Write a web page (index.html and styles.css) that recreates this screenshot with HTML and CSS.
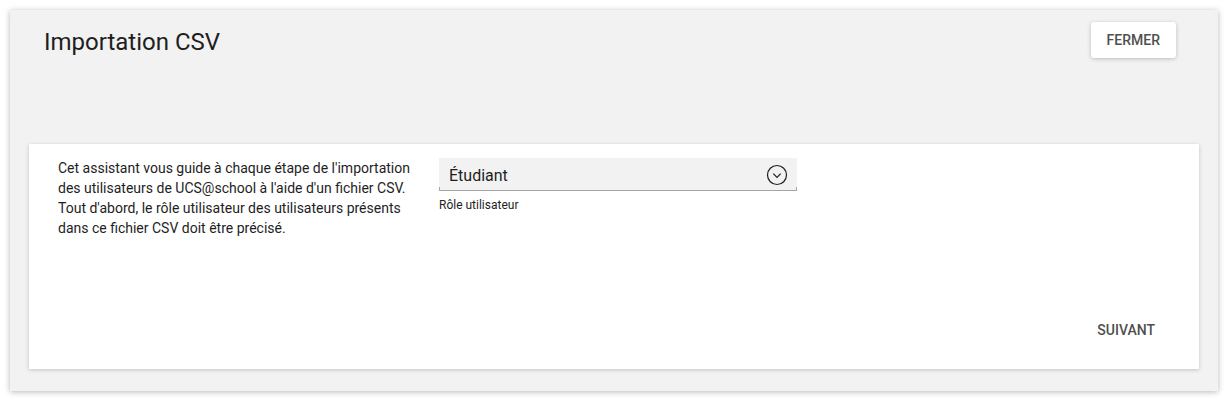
FILE: index.html
```html
<!DOCTYPE html>
<html lang="fr">
<head>
<meta charset="utf-8">
<title>Importation CSV</title>
<link rel="stylesheet" href="styles.css">
</head>
<body>
<div class="dialog">
  <div class="dialog-header">
    <h1 class="dialog-title">Importation CSV</h1>
    <button class="btn btn-raised">Fermer</button>
  </div>
  <div class="card">
    <div class="card-body">
      <p class="description">Cet assistant vous guide à chaque étape de l'importation des utilisateurs de UCS@school à l'aide d'un fichier CSV. Tout d'abord, le rôle utilisateur des utilisateurs présents dans ce fichier CSV doit être précisé.</p>
      <div class="field">
        <div class="select">
          <span class="select-value">Étudiant</span>
          <svg class="select-icon" width="22" height="22" viewBox="0 0 22 22" aria-hidden="true">
            <circle cx="11" cy="11" r="9.5" fill="none" stroke="#1e1e1e" stroke-width="1.2"/>
            <path d="M7.3 9.6 L11 13.3 L14.7 9.6" fill="none" stroke="#1e1e1e" stroke-width="1.2"/>
          </svg>
        </div>
        <label class="field-label">Rôle utilisateur</label>
      </div>
    </div>
    <div class="card-footer">
      <button class="btn btn-flat">Suivant</button>
    </div>
  </div>
</div>
</body>
</html>
```

FILE: styles.css
```css
html, body {
  margin: 0;
  padding: 0;
  background: #ffffff;
}

body {
  font-family: Roboto, "Liberation Sans", sans-serif;
  color: #1e1e1e;
  padding: 10px;
  height: 401px;
  box-sizing: border-box;
}

.dialog {
  background: #f2f2f2;
  height: 381px;
  box-sizing: border-box;
  box-shadow: 0 1px 6px rgba(0, 0, 0, 0.28);
  display: flex;
  flex-direction: column;
  padding: 0 19px 22px 19px;
}

.dialog-header {
  height: 134px;
  display: flex;
  justify-content: space-between;
  align-items: flex-start;
  padding: 12px 23px 0 15px;
  box-sizing: border-box;
}

.dialog-title {
  margin: 0;
  font-size: 24px;
  font-weight: 400;
  line-height: 40px;
  color: #1e1e1e;
}

.btn {
  font-family: Roboto, "Liberation Sans", sans-serif;
  font-size: 14px;
  font-weight: 500;
  text-transform: uppercase;
  color: #4f4f4f;
  border: 0;
  height: 36px;
  padding: 0 16px;
  border-radius: 3px;
  cursor: pointer;
}

.btn-raised {
  background: #ffffff;
  margin-top: 0;
  box-shadow: 0 1px 4px rgba(0, 0, 0, 0.22);
}

.btn-flat {
  background: transparent;
  padding: 0 14px;
}

.card {
  flex: 1;
  background: #ffffff;
  box-shadow: 0 1px 4px rgba(0, 0, 0, 0.2);
  display: flex;
  flex-direction: column;
  padding: 14px 30px 21px 29px;
}

.card-body {
  display: flex;
  align-items: flex-start;
  gap: 26px;
}

.description {
  margin: 0;
  width: 355px;
  font-size: 14px;
  line-height: 20px;
  color: #1e1e1e;
}

.field {
  width: 358px;
  display: flex;
  flex-direction: column;
}

.select {
  position: relative;
  height: 33px;
  box-sizing: border-box;
  background: #f2f2f2;
  border-bottom: 1px solid #a6a6a6;
  display: flex;
  align-items: center;
  justify-content: space-between;
  padding: 0 9px 0 10px;
}

.select::before,
.select::after {
  content: "";
  position: absolute;
  bottom: 0;
  width: 1px;
  height: 3px;
  background: #a6a6a6;
}

.select::before { left: 0; }
.select::after { right: 0; }

.select-value {
  font-size: 16px;
  color: #1e1e1e;
  padding-top: 2px;
}

.select-icon {
  display: block;
  margin-top: 1px;
}

.field-label {
  font-size: 12px;
  line-height: 14px;
  margin-top: 7px;
  color: #1e1e1e;
}

.card-footer {
  margin-top: auto;
  display: flex;
  justify-content: flex-end;
}
```
